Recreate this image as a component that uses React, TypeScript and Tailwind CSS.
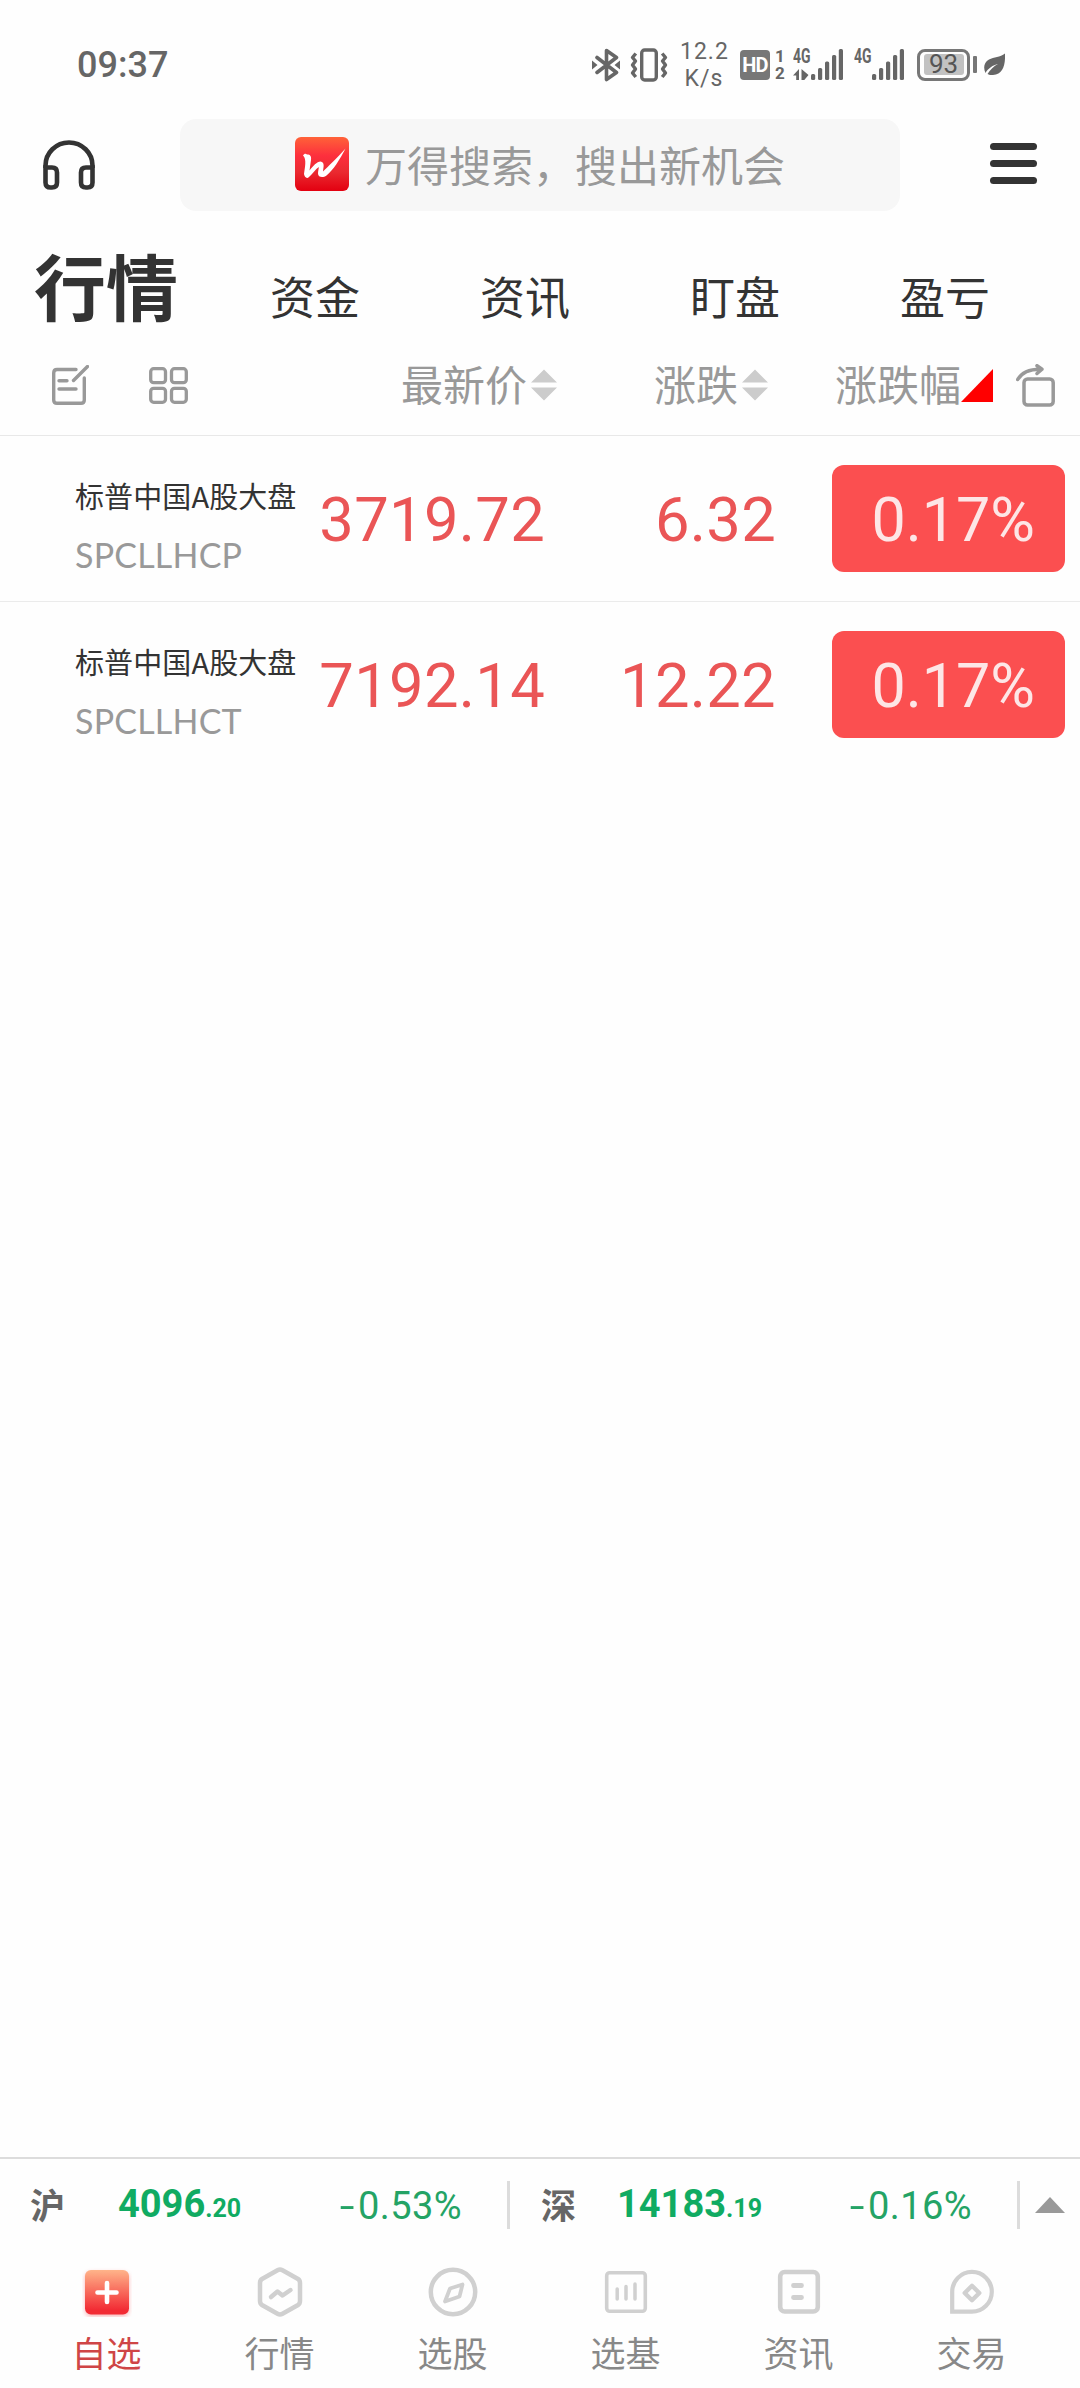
import React from 'react';

const quotes = [
  { name: '标普中国A股大盘', code: 'SPCLLHCP', price: '3719.72', change: '6.32', percent: '0.17%' },
  { name: '标普中国A股大盘', code: 'SPCLLHCT', price: '7192.14', change: '12.22', percent: '0.17%' },
];

const tabs = ['行情', '资金', '资讯', '盯盘', '盈亏'];

export default function App() {
  return (
    <div className="flex h-[2388px] w-[1080px] flex-col overflow-hidden bg-[#fefefe] font-['Noto_Sans_CJK_SC',sans-serif] text-[#333]">
      <StatusBar />
      <SearchBar />
      <nav className="grid h-[134px] w-[1050px] shrink-0 grid-cols-5">
        {tabs.map((tab, i) => (
          <div
            key={tab}
            className={
              i === 0
                ? 'pt-[37px] pl-[2px] text-center text-[72px] leading-[72px] font-bold'
                : 'pt-[62px] text-center text-[45px] leading-[46px]'
            }
          >
            {tab}
          </div>
        ))}
      </nav>
      <ListHeader />
      <main className="flex-1">
        {quotes.map((q) => (
          <QuoteRow key={q.code} {...q} />
        ))}
      </main>
      <Ticker />
      <BottomNav />
    </div>
  );
}

const StatusBar = () => (
  <div className="flex h-[119px] shrink-0 items-center pt-[10px] pr-[75px] pl-[77px] font-['Roboto',sans-serif] text-[#666]">
    <span className="text-[36px] leading-[40px] font-medium">09:37</span>
    <svg className="ml-auto" width="28" height="34" viewBox="0 0 28 34" fill="none" stroke="currentColor" strokeWidth="3.6" strokeLinejoin="round" strokeLinecap="round">
      <path d="M5 9.5 L24.5 24.5 L14.5 31.5 V2.5 L24.5 9.5 L5 24.5" />
      <path d="M0 12.5 L5.5 17 L0 21.5 Z M28 12.5 L22.5 17 L28 21.5 Z" fill="currentColor" stroke="none" />
    </svg>
    <svg className="ml-[10px]" width="38" height="34" viewBox="0 0 38 34" fill="none" stroke="currentColor" strokeWidth="3.4" strokeLinejoin="round">
      <rect x="11.7" y="2" width="14.6" height="30" rx="3" />
      <path d="M5.8 5.5 L2.5 9.5 L5.5 13 L2.5 17 L5.5 21 L2.5 25 L5.8 29" />
      <path d="M32.2 5.5 L35.5 9.5 L32.5 13 L35.5 17 L32.5 21 L35.5 25 L32.2 29" />
    </svg>
    <div className="ml-[12px] w-[48px] text-center text-[23px] leading-[27px] tracking-[1px]">
      <div>12.2</div>
      <div>K/s</div>
    </div>
    <div className="ml-[12px] flex h-[30px] w-[30px] items-center justify-center rounded-[4px] bg-[#777] text-[20px] font-bold tracking-[-0.7px] text-white">
      HD
    </div>
    <div className="ml-[5px] w-[9px] text-[17px] leading-[17px] font-bold">
      <div>1</div>
      <div>2</div>
    </div>
    <Signal arrows className="ml-[9px]" />
    <Signal className="ml-[11px]" />
    <div className="ml-[13px] flex h-[32px] w-[53px] items-center justify-center rounded-[8px] border-[3px] border-[#777]">
      <div className="flex h-[21px] w-[40px] items-center justify-center rounded-[3px] bg-[#c2c2c2] text-[26px] leading-[21px] text-[#555]">
        93
      </div>
    </div>
    <div className="ml-[3px] h-[17px] w-[4px] rounded-[1px] bg-[#777]" />
    <svg className="ml-[7px]" width="21" height="23" viewBox="0 0 21 23">
      <path d="M21 0.5 C21.5 12 19 21 9 22 C6 22.3 4.5 21.5 3.5 21 C6 17 10 13 14 11 C9 12 4 15.5 1.5 20 C-1 15 0 9 5 6.5 C10 4 16 4.5 21 0.5 Z" fill="currentColor" />
    </svg>
  </div>
);

const Signal = ({ arrows, className }: { arrows?: boolean; className: string }) => (
  <svg className={className} width="50" height="44" viewBox="0 -6 50 44" fill="currentColor">
    <text x="0" y="14" fontSize="19.5" fontWeight="700" textLength="17.5" lengthAdjust="spacingAndGlyphs">4G</text>
    {arrows && (
      <path d="M0 26.5 L6 20 V31 H3.2 V26.5 Z M8.5 20 L15.5 26 L11.3 31 H8.5 Z" />
    )}
    <rect x="18" y="25" width="4.2" height="6" rx="1.5" />
    <rect x="25" y="19" width="4.2" height="12" rx="1.5" />
    <rect x="32" y="12.5" width="4.2" height="18.5" rx="1.5" />
    <rect x="39" y="6" width="4.2" height="25" rx="1.5" />
    <rect x="45.8" y="0" width="4.2" height="31" rx="1.5" />
  </svg>
);

const SearchBar = () => (
  <div className="flex h-[92px] shrink-0 items-center pr-[43px] pl-[43px]">
    <svg width="52" height="50" viewBox="0 0 52 50" fill="none" stroke="#333" strokeWidth="4.6">
      <path d="M2.5 28 V25.5 A23.5 23 0 0 1 49.5 25.5 V28" />
      <path d="M2.5 27.5 H9 Q14 27.5 14 32.5 V42.5 Q14 47.5 9 47.5 H7.5 Q2.5 47.5 2.5 42.5 Z" />
      <path d="M49.5 27.5 H43 Q38 27.5 38 32.5 V42.5 Q38 47.5 43 47.5 H44.5 Q49.5 47.5 49.5 42.5 Z" />
    </svg>
    <div className="ml-[85px] flex h-[92px] w-[720px] items-center rounded-[16px] bg-[#f7f7f7] pb-[2px] pl-[115px]">
      <svg width="54" height="54" viewBox="0 0 54 54">
        <defs>
          <linearGradient id="logo" x1="0" y1="0" x2="0" y2="1">
            <stop offset="0" stopColor="#ff6238" />
            <stop offset="0.35" stopColor="#fd2f3d" />
            <stop offset="0.65" stopColor="#ea2a30" />
            <stop offset="1" stopColor="#e30010" />
          </linearGradient>
        </defs>
        <rect width="54" height="54" rx="6" fill="url(#logo)" />
        <path d="M8 18.5 C9.5 16 11 16.5 12 17.5 C15.5 17.5 16.5 19.5 16 23 L14.5 33.5 C18 29 22 24.5 25.5 24.5 C30 25 28.5 30 28 34.5 C33 29.5 42 21 50.5 11.5 C45.5 21.5 38 33.500 31.5 38.5 C27.500 41.5 23 40 23 36.5 C23 34 23.8 32 23.8 30 C20.5 32 17.5 37 14 40 C11.5 42.5 9.500 39.5 9 37 C9.8 31 12 22 8 18.5 Z" fill="#fff" />
      </svg>
      <span className="ml-[16px] pb-[1px] text-[42px] leading-[46px] text-[#999]">万得搜索，搜出新机会</span>
    </div>
    <div className="ml-auto flex w-[47px] flex-col gap-[10px] pb-[3px]">
      <div className="h-[7px] rounded-full bg-[#333]" />
      <div className="h-[7px] rounded-full bg-[#333]" />
      <div className="h-[7px] rounded-full bg-[#333]" />
    </div>
  </div>
);

const SortArrows = () => (
  <svg className="ml-[4px]" width="26" height="32" viewBox="0 0 26 32" fill="#ccc">
    <path d="M0 13.5 L13 0.5 L26 13.5 Z M0 18.5 L13 31.5 L26 18.5 Z" />
  </svg>
);

const ListHeader = () => (
  <div className="flex h-[91px] shrink-0 items-center border-b border-[#e8e8e8] pr-[25px] pb-[10px] pl-[52px] text-[42px] leading-[46px] text-[#999]">
    <svg width="37" height="40" viewBox="0 0 37 40" fill="none" stroke="#999" strokeWidth="3.4" strokeLinecap="round">
      <path d="M24 4.5 H5 Q1.7 4.5 1.7 8 V35 Q1.7 38.3 5 38.3 H29 Q32.3 38.3 32.3 35 V13" />
      <path d="M35.5 1.5 L21.5 15.5 M7 15.7 H15 M7 24 H24" />
    </svg>
    <svg className="ml-[60px]" width="39" height="37" viewBox="0 0 39 37" fill="none" stroke="#999" strokeWidth="3.3">
      <rect x="1.7" y="1.7" width="14.8" height="14" rx="3" />
      <rect x="22.5" y="1.7" width="14.8" height="14" rx="3" />
      <rect x="1.7" y="21.3" width="14.8" height="14" rx="3" />
      <rect x="22.5" y="21.3" width="14.8" height="14" rx="3" />
    </svg>
    <div className="ml-[213px] flex items-center">
      <span className="pb-[5px]">最新价</span>
      <SortArrows />
    </div>
    <div className="ml-[97px] flex items-center">
      <span className="pb-[5px]">涨跌</span>
      <SortArrows />
    </div>
    <div className="ml-auto flex items-center">
      <span className="pb-[5px]">涨跌幅</span>
      <svg width="32" height="33" viewBox="0 0 32 33">
        <path d="M0 33 L32 0 V33 Z" fill="#f00" />
      </svg>
    </div>
    <svg className="ml-[23px]" width="39" height="43" viewBox="0 0 39 43" fill="none" stroke="#999" strokeWidth="3.5" strokeLinecap="round" strokeLinejoin="round">
      <rect x="8" y="15" width="29.2" height="26" rx="3.5" />
      <path d="M1.7 15.5 C6 8 13 5 25 5.2 M21 1.7 L26 5.2 L21 9.5" />
    </svg>
  </div>
);

type Quote = (typeof quotes)[number];

const QuoteRow = ({ name, code, price, change, percent }: Quote) => (
  <div className="flex h-[166px] items-center border-b border-[#ebebeb] pr-[15px] pl-[75px] last:border-transparent">
    <div className="w-[230px] pt-[13px] whitespace-nowrap">
      <div className="text-[29px] leading-[40px] tracking-[0.1px]">{name}</div>
      <div className="mt-[20px] font-['Lato',sans-serif] text-[34px] leading-[40px] tracking-[0.2px] text-[#999]">{code}</div>
    </div>
    <div className="w-[240px] pt-[3px] text-right font-['Roboto',sans-serif] text-[61.5px] leading-[64px] tracking-[0.3px] text-[#ea5556]">{price}</div>
    <div className="w-[231px] pt-[3px] text-right font-['Roboto',sans-serif] text-[61.5px] leading-[64px] tracking-[0.3px] text-[#ea5556]">{change}</div>
    <div className="ml-auto flex h-[107px] w-[233px] items-center justify-end rounded-[12px] bg-[#fb4f50] pt-[3px] pr-[30px] font-['Roboto',sans-serif] text-[61px] leading-[64px] text-[#fde6e6]">
      {percent}
    </div>
  </div>
);

const Ticker = () => (
  <div className="flex h-[94px] shrink-0 items-center border-t-2 border-[#dcdcdc] pr-[15px] text-[#10ab62]">
    <TickerItem label="沪" whole="4096" fraction=".20" percent="0.53%" className="w-[507px] pl-[30px]" gap="ml-[53px]" />
    <div className="h-[48px] w-[3px] bg-[#dcdcdc]" />
    <TickerItem label="深" whole="14183" fraction=".19" percent="0.16%" className="w-[507px] pl-[31px]" gap="ml-[41px]" />
    <div className="h-[48px] w-[3px] bg-[#dcdcdc]" />
    <svg className="ml-auto" width="30" height="16" viewBox="0 0 30 16">
      <path d="M0 16 L15 0 L30 16 Z" fill="#999" />
    </svg>
  </div>
);

type TickerItemProps = {
  label: string;
  whole: string;
  fraction: string;
  percent: string;
  className: string;
  gap: string;
};

const TickerItem = ({ label, whole, fraction, percent, className, gap }: TickerItemProps) => (
  <div className={`flex items-center pr-[45px] ${className}`}>
    <span className="pb-[3px] text-[35px] leading-[40px] font-bold text-[#666]">{label}</span>
    <span className={`pt-[3px] font-['Roboto',sans-serif] text-[38px] leading-[40px] font-bold ${gap}`}>
      {whole}
      <span className="text-[25px]">{fraction}</span>
    </span>
    <span className="ml-auto pt-[1px] font-['Roboto',sans-serif] text-[38px] leading-[40px] tracking-[0.4px] text-[#24a365]">
      <span className="mr-[3px] inline-block origin-right scale-x-[1.4]">-</span>
      {percent}
    </span>
  </div>
);

const navItems = [
  {
    label: '自选',
    icon: (
      <>
        <defs>
          <linearGradient id="fav" x1="0" y1="0" x2="0" y2="1">
            <stop offset="0" stopColor="#ffb48a" />
            <stop offset="0.9" stopColor="#f22b34" />
          </linearGradient>
        </defs>
        <rect x="3" y="3" width="44" height="44.5" rx="6" fill="url(#fav)" className="drop-shadow-[0_2px_2px_rgba(242,43,52,0.35)]" />
        <path d="M25 16 V35 M15.5 25.5 H34.5" stroke="#fff" strokeWidth="4.6" strokeLinecap="round" />
      </>
    ),
  },
  {
    label: '行情',
    icon: (
      <>
        <path d="M22.5 3.2 Q25 1.8 27.5 3.2 L43 12 Q45 13.3 45 16 V34 Q45 36.7 43 38 L27.5 46.8 Q25 48.2 22.5 46.8 L7 38 Q5 36.7 5 34 V16 Q5 13.3 7 12 Z" />
        <path d="M16 30 L22.5 24.5 L27.5 28.5 L35.5 23" strokeWidth="4.5" strokeLinecap="round" strokeLinejoin="round" />
      </>
    ),
  },
  {
    label: '选股',
    icon: (
      <>
        <circle cx="25" cy="25" r="22.2" />
        <path d="M22 21.5 L34.5 17.5 L31.5 29.5 L17 34.5 Z" strokeWidth="3.8" strokeLinejoin="round" />
      </>
    ),
  },
  {
    label: '选基',
    icon: (
      <>
        <rect x="5.7" y="5.7" width="38.6" height="38.6" rx="3" strokeWidth="3.6" />
        <path d="M16.2 22 V32 M25 19.5 V32 M34 17 V32" strokeWidth="3.5" strokeLinecap="round" />
      </>
    ),
  },
  {
    label: '资讯',
    icon: (
      <>
        <rect x="6.2" y="5" width="37.6" height="39.5" rx="4.5" strokeWidth="4.6" />
        <path d="M19.5 18.5 H27.5 M19.5 30.5 H27.5" strokeWidth="4.8" strokeLinecap="round" />
      </>
    ),
  },
  {
    label: '交易',
    icon: (
      <>
        <path d="M5.2 44.7 V25 A19.8 19.9 0 1 1 25 44.7 Z" strokeWidth="4.2" />
        <path d="M25 18.7 L32.3 26 L25 33.3 L17.7 26 Z" strokeWidth="4.3" strokeLinejoin="round" />
      </>
    ),
  },
];

const BottomNav = () => (
  <div className="grid h-[137px] w-[1058px] shrink-0 grid-cols-6 pl-[20px]">
    {navItems.map((item, i) => (
      <div key={item.label} className="flex flex-col items-center pt-[16px]">
        <svg width="50" height="50" viewBox="0 0 50 50" fill="none" stroke={i === 0 ? 'none' : '#d0d0d0'} strokeWidth="4.5">
          {item.icon}
        </svg>
        <span className={`mt-[15px] text-[35px] leading-[40px] ${i === 0 ? 'text-[#cf4546]' : 'text-[#888]'}`}>
          {item.label}
        </span>
      </div>
    ))}
  </div>
);
